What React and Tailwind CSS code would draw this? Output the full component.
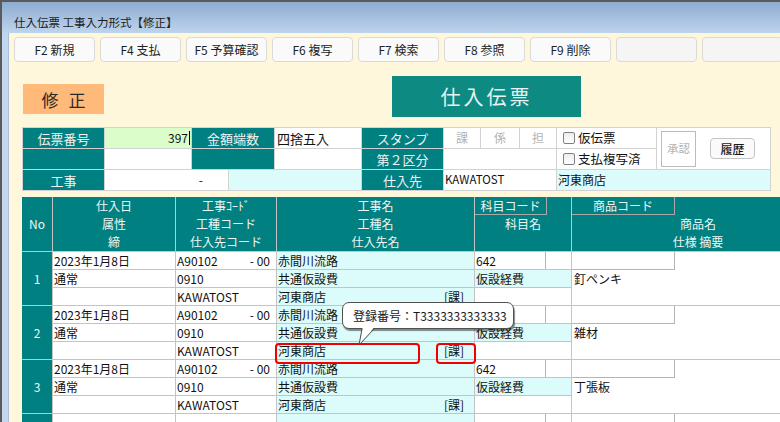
import React from "react";

const rows = [
  { no: 1, item: "釘ペンキ" },
  { no: 2, item: "雑材" },
  { no: 3, item: "丁張板" },
];

function Btn({ children, blank }) {
  return (
    <div
      className={`w-[81px] h-[25px] shrink-0 flex items-center justify-center rounded-[4px] border border-[#dadada] text-[12px] leading-none text-[#222] ${
        blank ? "bg-[#f5f5f5]" : "bg-[#fafafa]"
      }`}
    >
      {children}
    </div>
  );
}

function Label({ children, className = "" }) {
  return (
    <div className={`bg-[#008080] text-[#f2f2f2] text-[13px] leading-none flex items-center justify-center ${className}`}>
      {children}
    </div>
  );
}

function Check({ label }) {
  return (
    <div className="bg-white flex items-center pl-[6px] gap-[3px]">
      <span className="w-[12px] h-[12px] border border-[#808080] rounded-[2px] bg-gradient-to-b from-[#ececec] to-white" />
      <span className="text-[12.5px] leading-none text-[#111]">{label}</span>
    </div>
  );
}

function Cell({ children, className = "" }) {
  return (
    <div className={`h-[17px] flex items-center pl-[1px] text-[12px] leading-none text-[#111] whitespace-nowrap ${className}`}>
      {children}
    </div>
  );
}

function HeadLines({ lines, className = "" }) {
  return (
    <div className={`bg-[#008080] flex flex-col ${className}`}>
      {lines.map((l, i) => (
        <div key={i} className="h-[18px] flex items-center justify-center text-[12px] leading-none text-[#eef6f6] whitespace-nowrap">
          {l}
        </div>
      ))}
    </div>
  );
}

function Group({ r }) {
  const empty = !r;
  return (
    <div className="flex gap-px h-[53px]">
      <div className="w-[30px] bg-[#008080] flex items-center justify-center text-[12px] leading-none text-[#eef6f6]">
        {empty ? "" : r.no}
      </div>
      <div className="w-[122px] flex flex-col gap-px">
        <Cell className="bg-white">{empty ? "" : "2023年1月8日"}</Cell>
        <Cell className="bg-white">{empty ? "" : "通常"}</Cell>
        <Cell className="bg-white" />
      </div>
      <div className="w-[100px] flex flex-col gap-px">
        <Cell className="bg-white justify-between pr-[6px]">
          {empty ? null : (
            <>
              <span>A90102</span>
              <span>-&nbsp;00</span>
            </>
          )}
        </Cell>
        <Cell className="bg-white">{empty ? "" : "0910"}</Cell>
        <Cell className="bg-white">{empty ? "" : "KAWATOST"}</Cell>
      </div>
      <div className="w-[197px] flex flex-col gap-px">
        <Cell className="bg-[#dcfbfb]">{empty ? "" : "赤間川流路"}</Cell>
        <Cell className="bg-[#dcfbfb]">{empty ? "" : "共通仮設費"}</Cell>
        <Cell className="bg-[#dcfbfb] justify-between pr-[10px]">
          {empty ? null : (
            <>
              <span>河東商店</span>
              <span>[課]</span>
            </>
          )}
        </Cell>
      </div>
      <div className="w-[96px] flex flex-col gap-px">
        <div className="h-[17px] bg-white flex">
          <div className="w-[71px] border-r border-[#b4b4b4] flex items-center pl-[1px] text-[12px] leading-none text-[#111]">
            {empty ? "" : "642"}
          </div>
        </div>
        <Cell className="bg-[#dcfbfb]">{empty ? "" : "仮設経費"}</Cell>
        <Cell className="bg-white" />
      </div>
      <div className="w-[252px] bg-white flex flex-col">
        <div className="w-[103px] h-[18px] border-r border-b border-[#b4b4b4]" />
        <Cell className="pl-[2px]">{empty ? "" : r.item}</Cell>
      </div>
    </div>
  );
}

export default function App() {
  return (
    <div className="relative w-[780px] h-[422px] overflow-hidden flex flex-col bg-[#c2d7ee] border-l-2 border-t-2 border-[#5a5a5a] font-['Noto_Sans_CJK_JP','Noto_Sans',sans-serif]">
      {/* title bar */}
      <div className="h-[31px] shrink-0 bg-gradient-to-b from-[#8eacd0] to-[#bdd4ed] flex items-end pl-[12px] pb-[5px]">
        <span className="text-[11.5px] leading-none text-[#1c1c1c]">仕入伝票 工事入力形式【修正】</span>
      </div>
      <div className="flex flex-1 min-h-0">
        <div className="w-[7px] shrink-0 bg-[#c2d7ee] border-r border-[#a9bdd3]" />
        <div className="flex-1 min-w-0 bg-[#fff7dc] flex flex-col overflow-hidden">
          {/* toolbar */}
          <div className="flex gap-[5px] pl-[5px] pt-[4px]">
            <Btn>F2 新規</Btn>
            <Btn>F4 支払</Btn>
            <Btn>F5 予算確認</Btn>
            <Btn>F6 複写</Btn>
            <Btn>F7 検索</Btn>
            <Btn>F8 参照</Btn>
            <Btn>F9 削除</Btn>
            <Btn blank />
            <Btn blank />
          </div>
          <div className="mt-[2px] h-[2px] bg-[#c9c6bd]" />

          {/* badge + title */}
          <div className="flex items-start">
            <div className="ml-[14px] mt-[20px] w-[81px] h-[30px] bg-[#ffb978] flex items-center justify-center gap-[10px] text-[17px] leading-none text-[#2a2a2a]">
              <span>修</span>
              <span>正</span>
            </div>
            <div className="ml-[288px] mt-[12px] w-[189px] h-[41px] bg-[#0d8a82] flex items-center justify-center text-[20px] tracking-[3px] leading-none text-[#e8f3f1]">
              仕入伝票
            </div>
          </div>

          {/* header table */}
          <div className="ml-[13px] mt-[10px] w-[749px] grid grid-cols-[81px_86px_36px_45px_86px_81px_36px_38px_36px_99px_113px] grid-rows-[20px_20px_20px] gap-px bg-[#d2d2d2] border border-[#d2d2d2]">
            <Label>伝票番号</Label>
            <div className="bg-[#dafdc9] flex items-center justify-end pr-[1px] text-[12px] leading-none text-[#111]">
              397<span className="ml-[1px] w-px h-[14px] bg-black" />
            </div>
            <Label className="col-span-2">金額端数</Label>
            <div className="bg-white flex items-center pl-[2px] text-[13px] leading-none text-[#111]">四捨五入</div>
            <Label>スタンプ</Label>
            <div className="bg-white flex items-center justify-center text-[12px] text-[#b4b4b4] leading-none">課</div>
            <div className="bg-white flex items-center justify-center text-[12px] text-[#b4b4b4] leading-none">係</div>
            <div className="bg-white flex items-center justify-center text-[12px] text-[#b4b4b4] leading-none">担</div>
            <Check label="仮伝票" />
            <div className="row-span-2 bg-white flex items-center">
              <div className="ml-[4px] w-[35px] h-[36px] border border-[#bcbcbc] flex items-center justify-center text-[11.5px] leading-none text-[#b4b4b4]">
                承認
              </div>
              <div className="ml-[14px] w-[45px] h-[21px] border border-[#c4c4c4] rounded-[4px] bg-[#fafafa] flex items-center justify-center text-[12px] leading-none font-medium text-[#1a1a1a]">
                履歴
              </div>
            </div>

            <Label />
            <div className="bg-white" />
            <Label className="col-span-2" />
            <div className="bg-white" />
            <Label>第２区分</Label>
            <div className="bg-white col-span-3" />
            <Check label="支払複写済" />

            <Label>工事</Label>
            <div className="col-span-2 bg-white flex items-center justify-end pr-[25px] text-[12px] leading-none text-[#111]">-</div>
            <div className="col-span-2 bg-[#dcfbfb]" />
            <Label>仕入先</Label>
            <div className="col-span-3 bg-white flex items-center pl-[1px] text-[11.5px] leading-none text-[#111]">KAWATOST</div>
            <div className="col-span-2 bg-[#dcfbfb] flex items-center pl-[1px] text-[12px] leading-none text-[#111]">河東商店</div>
          </div>

          {/* main grid */}
          <div className="ml-[13px] mt-[6px] w-[802px] shrink-0 flex flex-col gap-px bg-[#c4c4c4]">
            <div className="flex gap-px h-[54px]">
              <div className="w-[30px] bg-[#008080] flex items-center justify-center text-[12px] leading-none text-[#eef6f6]">No</div>
              <HeadLines className="w-[122px]" lines={["仕入日", "属性", "締"]} />
              <HeadLines className="w-[100px]" lines={["工事ｺｰﾄﾞ", "工種コード", "仕入先コード"]} />
              <HeadLines className="w-[197px]" lines={["工事名", "工種名", "仕入先名"]} />
              <div className="w-[96px] bg-[#008080] flex flex-col">
                <div className="w-[72px] h-[18px] border-r border-b border-[#a9a9a9] flex items-center justify-center text-[12px] leading-none text-[#eef6f6]">
                  科目コード
                </div>
                <div className="h-[18px] flex items-center justify-center text-[12px] leading-none text-[#eef6f6]">科目名</div>
              </div>
              <div className="w-[252px] bg-[#008080] flex flex-col">
                <div className="w-[103px] h-[18px] border-r border-b border-[#a9a9a9] flex items-center justify-center text-[12px] leading-none text-[#eef6f6]">
                  商品コード
                </div>
                <div className="h-[18px] flex items-center justify-center text-[12px] leading-none text-[#eef6f6]">商品名</div>
                <div className="h-[18px] flex items-center justify-center text-[12px] leading-none text-[#eef6f6]">仕様&nbsp;摘要</div>
              </div>
            </div>
            {rows.map((r) => (
              <Group key={r.no} r={r} />
            ))}
            <Group r={null} />
          </div>
        </div>
      </div>

      {/* overlays: tooltip and highlights */}
      <div className="absolute left-[273px] top-[341px] w-[145px] h-[21px] border-2 border-[#f00000] rounded-[4px]" />
      <div className="absolute left-[434px] top-[341px] w-[40px] h-[21px] border-2 border-[#f00000] rounded-[4px]" />
      <div className="absolute left-[340px] top-[300px] w-[172px] h-[27px] bg-white border border-[#505050] rounded-[7px] shadow-[1px_2px_1px_rgba(0,0,0,0.45)] flex items-center pl-[10px] text-[12px] leading-none whitespace-nowrap text-[#1a1a1a]">
        登録番号：T3333333333333
      </div>
      <svg className="absolute left-[350px] top-[320px]" width="30" height="26" viewBox="0 0 30 26">
        <polygon points="10.5,6 21.5,6 7.5,22" fill="#fff" stroke="none" />
        <polyline points="10,7 7,23 22,7" fill="none" stroke="#4a4a4a" strokeWidth="1" />
      </svg>
    </div>
  );
}
